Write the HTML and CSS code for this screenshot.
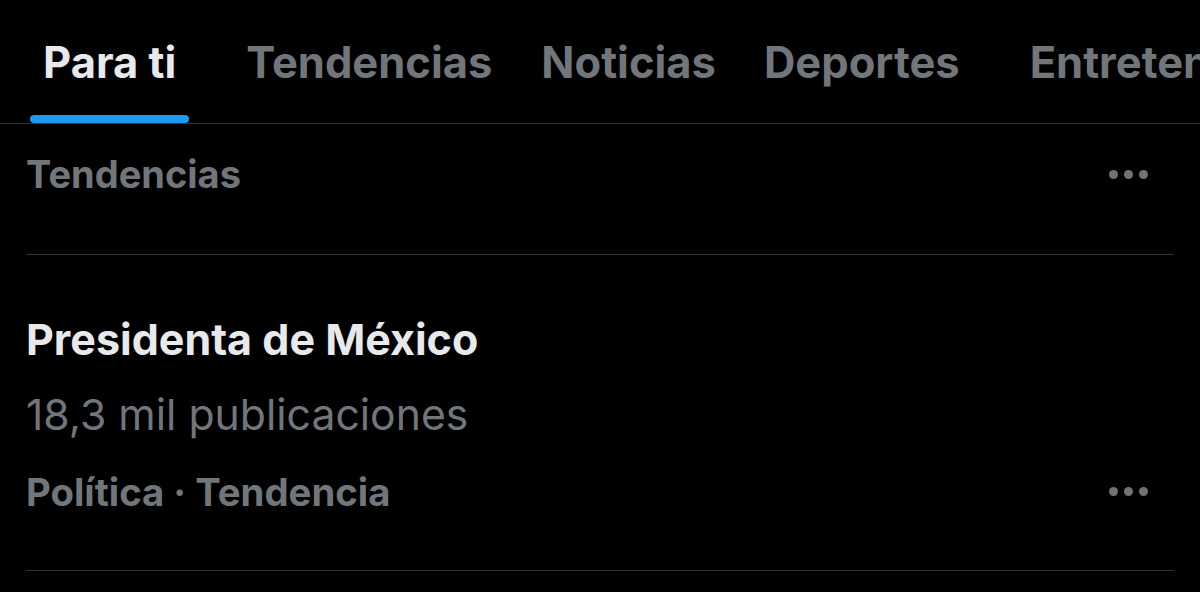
FILE: index.html
```html
<!DOCTYPE html>
<html lang="es">
<head>
<meta charset="utf-8">
<link rel="stylesheet" href="styles.css">
</head>
<body>
<div class="app">
  <nav class="tabs">
    <div class="tab active"><span>Para ti</span></div>
    <div class="tab t2"><span>Tendencias</span></div>
    <div class="tab t3"><span>Noticias</span></div>
    <div class="tab t4"><span>Deportes</span></div>
    <div class="tab t5"><span>Entretenimiento</span></div>
  </nav>
  <section class="header-row">
    <h2 class="section-title">Tendencias</h2>
    <div class="more"><i></i><i></i><i></i></div>
  </section>
  <article class="trend">
    <div class="trend-body">
      <div class="trend-name">Presidenta de México</div>
      <div class="trend-count">18,3 mil publicaciones</div>
      <div class="trend-meta-row">
        <div class="trend-meta">Política · Tendencia</div>
        <div class="more"><i></i><i></i><i></i></div>
      </div>
    </div>
  </article>
</div>
</body>
</html>
```
FILE: styles.css
```css
html, body {
  margin: 0;
  padding: 0;
  background: #000;
}
body {
  font-family: Inter, "Liberation Sans", sans-serif;
  width: 1200px;
  height: 592px;
  overflow: hidden;
}
.app {
  width: 1200px;
}
.tabs {
  display: flex;
  height: 123px;
  border-bottom: 1px solid #2f3336;
  white-space: nowrap;
  overflow: hidden;
  padding-left: 30px;
  box-sizing: content-box;
}
.tab {
  position: relative;
  padding: 41px 13px 0;
  font-size: 43.5px;
  font-weight: 700;
  color: #71767b;
  line-height: 1;
  flex: none;
}
.tab.active {
  color: #e7e9ea;
}
.tab.active::after {
  content: "";
  position: absolute;
  left: 0;
  right: 0;
  bottom: 0;
  height: 8px;
  border-radius: 4px;
  background: #1d9bf0;
}
.t2 { margin-left: 44px; }
.t3 { margin-left: 23px; }
.t4 { margin-left: 22px; }
.t5 { margin-left: 44px; }

.header-row {
  display: flex;
  align-items: flex-start;
  justify-content: space-between;
  margin: 0 26px;
  height: 131px;
  border-bottom: 1px solid #2f3336;
  box-sizing: border-box;
}
.section-title {
  margin: 0;
  padding-top: 31px;
  font-size: 38px;
  font-weight: 700;
  color: #71767b;
  line-height: 1;
}
.more {
  display: flex;
  gap: 6px;
  padding-top: 46px;
  padding-right: 26px;
}
.more i {
  display: block;
  width: 9px;
  height: 9px;
  border-radius: 50%;
  background: #6f7377;
}
.trend {
  margin: 0 26px;
  height: 316px;
  border-bottom: 1px solid #2f3336;
  box-sizing: border-box;
}
.trend-body {
  padding-top: 63px;
}
.trend-name {
  font-size: 43px;
  font-weight: 700;
  color: #e7e9ea;
  line-height: 1;
}
.trend-count {
  margin-top: 33px;
  font-size: 42.7px;
  font-weight: 400;
  color: #71767b;
  line-height: 1;
}
.trend-meta-row {
  display: flex;
  justify-content: space-between;
  align-items: center;
  margin-top: 36px;
}
.trend-meta {
  font-size: 38.3px;
  font-weight: 700;
  color: #71767b;
  line-height: 1;
}
.trend-meta-row .more {
  padding-top: 0;
}
```
